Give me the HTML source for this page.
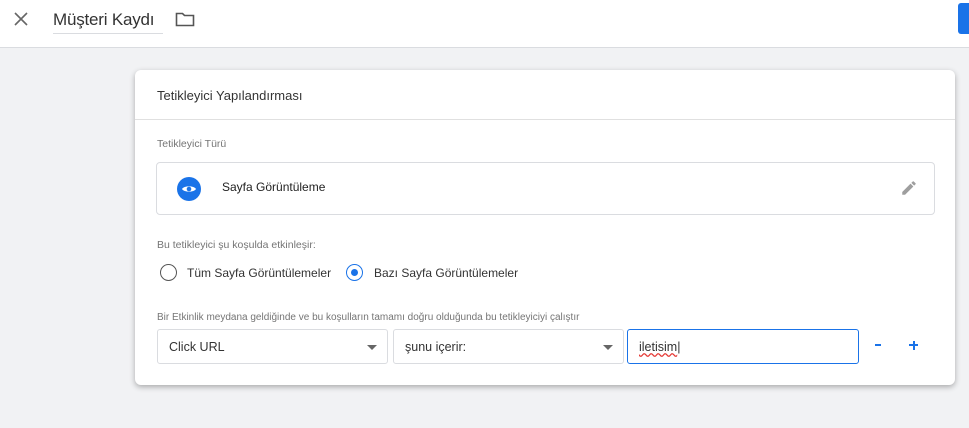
<!DOCTYPE html>
<html><head><meta charset="utf-8"><style>
*{box-sizing:border-box;margin:0;padding:0}
body{width:969px;height:428px;overflow:hidden;background:#f1f2f4;font-family:"Liberation Sans",Arial,sans-serif;position:relative;color:#212121}
.top{position:absolute;left:0;top:0;width:969px;height:48px;background:#fff;border-bottom:1px solid #dadce0}
.abs{position:absolute}
.card{position:absolute;left:135px;top:70px;width:820px;height:315px;background:#fff;border-radius:6px;box-shadow:0 2px 6px rgba(0,0,0,.3)}
.lbl{font-size:10.5px;color:#757575}
.sel{position:absolute;top:259px;height:35px;border:1px solid #dadce0;border-radius:3px;font-size:12.5px;padding:10px 11px;color:#333}
.arr{position:absolute;right:10px;top:15px;width:0;height:0;border-left:5px solid transparent;border-right:5px solid transparent;border-top:5px solid #666}
</style></head><body>
<div class="top">
 <svg class="abs" style="left:14px;top:12px" width="14" height="14" viewBox="0 0 14 14"><path d="M1 1L13 13M13 1L1 13" stroke="#666" stroke-width="1.6"/></svg>
 <div class="abs" style="left:53px;top:10px;font-size:17px;color:#333;border-bottom:1px solid #dadce0;padding-bottom:3px;width:110px;white-space:nowrap;letter-spacing:-0.2px">Müşteri Kaydı</div>
 <svg class="abs" style="left:175px;top:11px" width="20" height="16" viewBox="0 0 20 16"><path d="M1.5 2.5h6l2 2h9v10h-17z" fill="none" stroke="#555" stroke-width="1.6"/></svg>
 <div class="abs" style="left:958px;top:3px;width:14px;height:31px;background:#1a73e8;border-radius:3px"></div>
</div>
<div class="card">
 <div class="abs" style="left:22px;top:18px;font-size:13px;color:#333">Tetikleyici Yapılandırması</div>
 <div class="abs" style="left:0;top:49px;width:820px;height:1px;background:#e0e0e0"></div>
 <div class="abs lbl" style="left:22px;top:68px">Tetikleyici Türü</div>
 <div class="abs" style="left:21px;top:92px;width:779px;height:53px;border:1px solid #dadce0;border-radius:4px">
  <svg class="abs" style="left:20px;top:14px" width="24" height="24" viewBox="0 0 24 24"><circle cx="12" cy="12" r="12" fill="#1a73e8"/><path d="M5 12c2-3.5 12-3.5 14 0c-2 3.5-12 3.5-14 0z" fill="#fff"/><circle cx="12" cy="12" r="2.3" fill="#1a73e8"/></svg>
  <div class="abs" style="left:65px;top:17px;font-size:12px;color:#222">Sayfa Görüntüleme</div>
  <svg class="abs" style="left:743px;top:16px" width="18" height="18" viewBox="0 0 24 24"><path d="M3 17.25V21h3.75L17.81 9.94l-3.75-3.75L3 17.25zM20.71 7.04a1 1 0 0 0 0-1.41l-2.34-2.34a1 1 0 0 0-1.41 0l-1.83 1.83 3.75 3.75 1.83-1.83z" fill="#9e9e9e"/></svg>
 </div>
 <div class="abs lbl" style="left:22px;top:169px">Bu tetikleyici şu koşulda etkinleşir:</div>
 <div class="abs" style="left:25px;top:194px;width:17px;height:17px;border:1.5px solid #555;border-radius:50%"></div>
 <div class="abs" style="left:52px;top:196px;font-size:12px;color:#333">Tüm Sayfa Görüntülemeler</div>
 <div class="abs" style="left:211px;top:194px;width:17px;height:17px;border:1.5px solid #1a73e8;border-radius:50%"><div style="margin:3.5px;width:7px;height:7px;border-radius:50%;background:#1a73e8"></div></div>
 <div class="abs" style="left:239px;top:196px;font-size:12px;color:#333">Bazı Sayfa Görüntülemeler</div>
 <div class="abs lbl" style="left:22px;top:242px;font-size:10px">Bir Etkinlik meydana geldiğinde ve bu koşulların tamamı doğru olduğunda bu tetikleyiciyi çalıştır</div>
 <div class="sel" style="left:22px;width:231px">Click URL<div class="arr"></div></div>
 <div class="sel" style="left:258px;width:231px">şunu içerir:<div class="arr"></div></div>
 <div class="sel" style="left:492px;width:232px;border:1.5px solid #1a73e8"><span style="text-decoration:underline wavy #e53935">iletisim</span>|</div>
 <div class="abs" style="left:740px;top:274px;width:6px;height:2px;background:#1a73e8"></div>
 <div class="abs" style="left:774px;top:274px;width:9px;height:2px;background:#1a73e8"></div>
 <div class="abs" style="left:777.5px;top:270.5px;width:2px;height:9px;background:#1a73e8"></div>
</div>
</body></html>
